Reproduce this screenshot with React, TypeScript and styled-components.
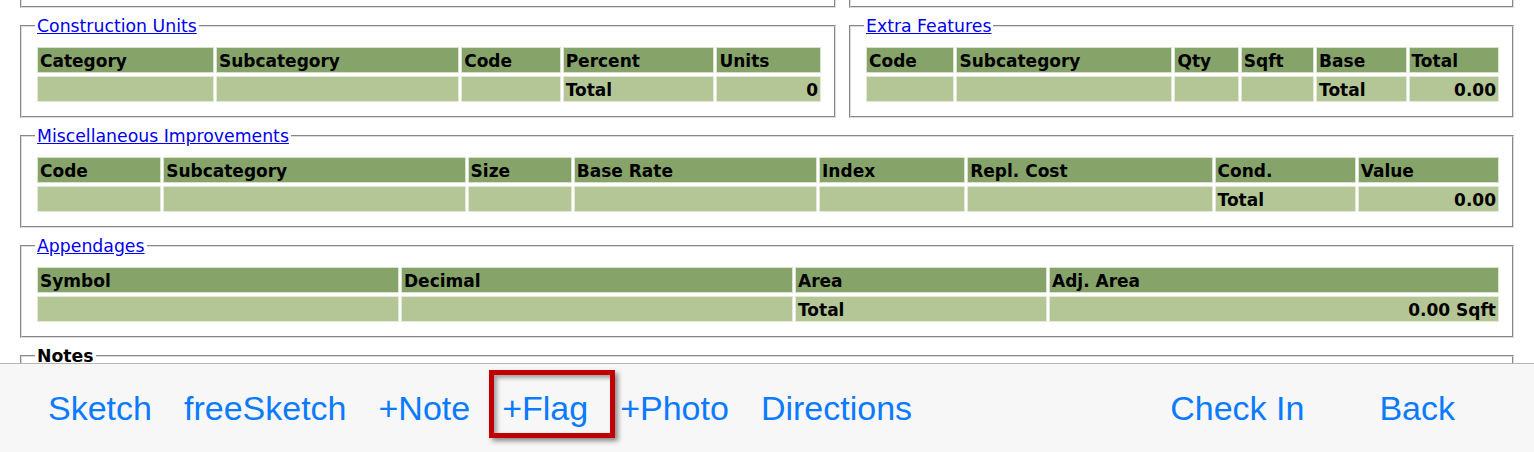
import React from "react";
import styled, { createGlobalStyle } from "styled-components";

const GlobalStyle = createGlobalStyle`
  *, *::before, *::after {
    box-sizing: border-box;
  }
  body {
    margin: 0;
    background: #ffffff;
    font-family: "DejaVu Sans", Verdana, sans-serif;
  }
`;

const Page = styled.div`
  display: flex;
  flex-direction: column;
  gap: 8px;
  padding: 0 20px 100px;
`;

const Row = styled.div`
  display: flex;
  gap: 13px;
`;

const Stub = styled.div<{ $w?: number }>`
  flex: ${(p) => (p.$w ? `0 0 ${p.$w}px` : "1")};
  height: 8px;
  border: 2px groove #dcdcdc;
  border-top: none;
`;

const Box = styled.fieldset<{ $w?: number }>`
  flex: ${(p) => (p.$w ? `0 0 ${p.$w}px` : "1")};
  min-width: 0;
  margin: 0;
  padding: 8px 11px 11px 13px;
  border: 2px groove #dcdcdc;
`;

const Legend = styled.legend<{ $plain?: boolean }>`
  padding: 0 2px;
  font-size: 17.3px;
  line-height: 20px;
  color: ${(p) => (p.$plain ? "#000" : "#0000ee")};
  font-weight: ${(p) => (p.$plain ? "bold" : "normal")};
  text-decoration: ${(p) => (p.$plain ? "none" : "underline")};
  cursor: pointer;
`;

const Grid = styled.table`
  width: 100%;
  table-layout: fixed;
  border-collapse: separate;
  border-spacing: 2px 3px;
  font-size: 17px;
  font-weight: bold;
  color: #000;
`;

const Col = styled.col<{ $w: number }>`
  width: ${(p) => p.$w}px;
`;

const Head = styled.th`
  background: #86a46a;
  text-align: left;
  padding: 3px 2px 1px;
  line-height: 20px;
  border: 1px solid #d9e2cc;
  white-space: nowrap;
  overflow: hidden;
`;

const Cell = styled.td<{ $right?: boolean }>`
  background: #b5c696;
  text-align: ${(p) => (p.$right ? "right" : "left")};
  padding: 3px 2px 1px;
  line-height: 20px;
  height: 26px;
  border: 1px solid #e3e9d8;
  white-space: nowrap;
`;

type Column = { label: string; w: number };

const DataTable = ({
  cols,
  totalAt,
  value,
}: {
  cols: Column[];
  totalAt: number;
  value: string;
}) => (
  <Grid>
    <colgroup>
      {cols.map((c) => (
        <Col key={c.label} $w={c.w} />
      ))}
    </colgroup>
    <thead>
      <tr>
        {cols.map((c) => (
          <Head key={c.label}>{c.label}</Head>
        ))}
      </tr>
    </thead>
    <tbody>
      <tr>
        {cols.map((c, i) => (
          <Cell key={c.label} $right={i === cols.length - 1}>
            {i === totalAt ? "Total" : i === cols.length - 1 ? value : ""}
          </Cell>
        ))}
      </tr>
    </tbody>
  </Grid>
);

const Toolbar = styled.div`
  position: fixed;
  left: 0;
  right: 0;
  bottom: 0;
  height: 89px;
  display: flex;
  align-items: stretch;
  padding: 0 79px 0 48px;
  background: #f7f7f7;
  border-top: 1px solid #b4b4b4;
`;

const Group = styled.div<{ $gap: number }>`
  display: flex;
  align-items: stretch;
  gap: ${(p) => p.$gap}px;
`;

const Spacer = styled.div`
  flex: 1;
`;

const Action = styled.a<{ $marked?: boolean }>`
  position: relative;
  display: flex;
  align-items: center;
  padding-top: 1px;
  font-family: "Liberation Sans", Arial, sans-serif;
  font-size: 34px;
  color: #0a7afe;
  cursor: pointer;

  ${(p) =>
    p.$marked &&
    `
    &::after {
      content: "";
      position: absolute;
      left: -13px;
      width: 126px;
      top: 6px;
      bottom: 14px;
      border: 5px solid #c00000;
      box-shadow: 3px 3px 5px rgba(0, 0, 0, 0.45),
        inset 3px 3px 4px rgba(0, 0, 0, 0.35);
      pointer-events: none;
    }
  `}
`;

const construction: Column[] = [
  { label: "Category", w: 176 },
  { label: "Subcategory", w: 242 },
  { label: "Code", w: 99 },
  { label: "Percent", w: 151 },
  { label: "Units", w: 104 },
];

const extras: Column[] = [
  { label: "Code", w: 88 },
  { label: "Subcategory", w: 215 },
  { label: "Qty", w: 64 },
  { label: "Sqft", w: 73 },
  { label: "Base", w: 90 },
  { label: "Total", w: 90 },
];

const misc: Column[] = [
  { label: "Code", w: 124 },
  { label: "Subcategory", w: 302 },
  { label: "Size", w: 104 },
  { label: "Base Rate", w: 243 },
  { label: "Index", w: 146 },
  { label: "Repl. Cost", w: 245 },
  { label: "Cond.", w: 141 },
  { label: "Value", w: 141 },
];

const appendages: Column[] = [
  { label: "Symbol", w: 362 },
  { label: "Decimal", w: 392 },
  { label: "Area", w: 252 },
  { label: "Adj. Area", w: 450 },
];

const App = () => {
  return (
    <>
      <GlobalStyle />
      <Page>
        <Row>
          <Stub $w={816} />
          <Stub />
        </Row>
        <Row>
          <Box $w={816}>
            <Legend>Construction Units</Legend>
            <DataTable cols={construction} totalAt={3} value="0" />
          </Box>
          <Box>
            <Legend>Extra Features</Legend>
            <DataTable cols={extras} totalAt={4} value="0.00" />
          </Box>
        </Row>
        <Box>
          <Legend>Miscellaneous Improvements</Legend>
          <DataTable cols={misc} totalAt={6} value="0.00" />
        </Box>
        <Box>
          <Legend>Appendages</Legend>
          <DataTable cols={appendages} totalAt={2} value="0.00 Sqft" />
        </Box>
        <Box>
          <Legend $plain>Notes</Legend>
          <div style={{ height: 60 }} />
        </Box>
      </Page>
      <Toolbar>
        <Group $gap={32}>
          <Action>Sketch</Action>
          <Action>freeSketch</Action>
          <Action>+Note</Action>
          <Action $marked>+Flag</Action>
          <Action>+Photo</Action>
          <Action>Directions</Action>
        </Group>
        <Spacer />
        <Group $gap={75}>
          <Action>Check In</Action>
          <Action>Back</Action>
        </Group>
      </Toolbar>
    </>
  );
};

export default App;
